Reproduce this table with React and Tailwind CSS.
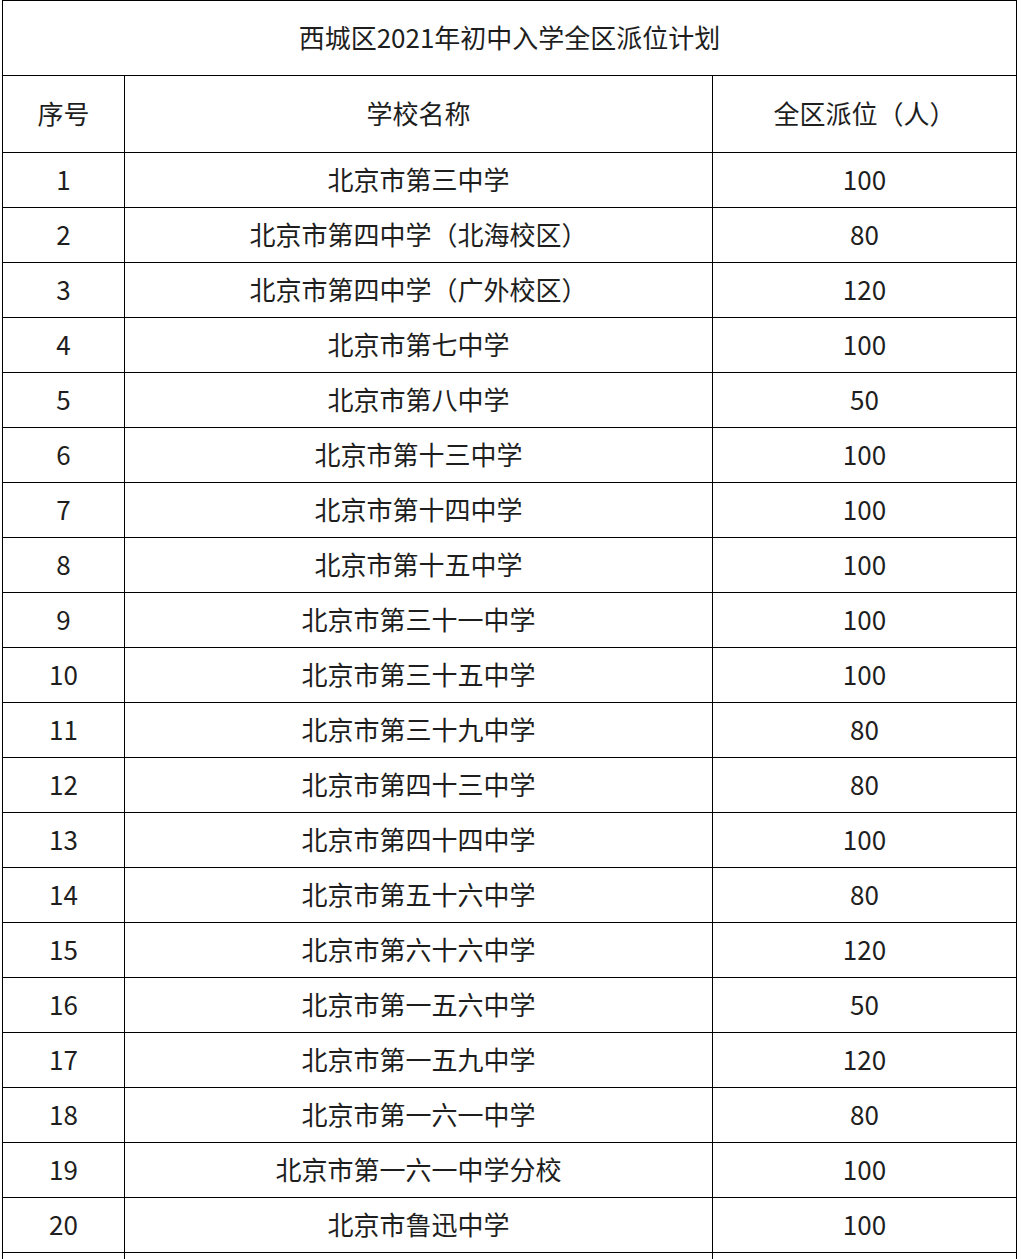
const rows = [
  [1, '北京市第三中学', 100],
  [2, '北京市第四中学（北海校区）', 80],
  [3, '北京市第四中学（广外校区）', 120],
  [4, '北京市第七中学', 100],
  [5, '北京市第八中学', 50],
  [6, '北京市第十三中学', 100],
  [7, '北京市第十四中学', 100],
  [8, '北京市第十五中学', 100],
  [9, '北京市第三十一中学', 100],
  [10, '北京市第三十五中学', 100],
  [11, '北京市第三十九中学', 80],
  [12, '北京市第四十三中学', 80],
  [13, '北京市第四十四中学', 100],
  [14, '北京市第五十六中学', 80],
  [15, '北京市第六十六中学', 120],
  [16, '北京市第一五六中学', 50],
  [17, '北京市第一五九中学', 120],
  [18, '北京市第一六一中学', 80],
  [19, '北京市第一六一中学分校', 100],
  [20, '北京市鲁迅中学', 100],
];

const cell = 'border border-black text-center align-middle p-0 pb-[2px]';

const App = () => {
  return (
    <div className="bg-white min-h-screen pl-[2px] text-[#1e1e1e] text-[26px] leading-none [font-family:'Noto_Sans_CJK_SC','Noto_Sans',sans-serif]">
      <table className="table-fixed border-collapse w-[1015px]">
        <colgroup>
          <col className="w-[122px]" />
          <col className="w-[588px]" />
          <col />
        </colgroup>
        <tbody>
          <tr className="h-[75px]">
            <td colSpan={3} className={cell}>西城区2021年初中入学全区派位计划</td>
          </tr>
          <tr className="h-[77px]">
            <td className={cell}>序号</td>
            <td className={cell}>学校名称</td>
            <td className={cell}>全区派位（人）</td>
          </tr>
          {rows.map(([n, name, seats]) => (
            <tr key={n} className="h-[55px]">
              <td className={cell}>{n}</td>
              <td className={cell}>{name}</td>
              <td className={cell}>{seats}</td>
            </tr>
          ))}
          <tr className="h-[55px]">
            <td className={cell}></td>
            <td className={cell}></td>
            <td className={cell}></td>
          </tr>
        </tbody>
      </table>
    </div>
  );
};

export default App;
